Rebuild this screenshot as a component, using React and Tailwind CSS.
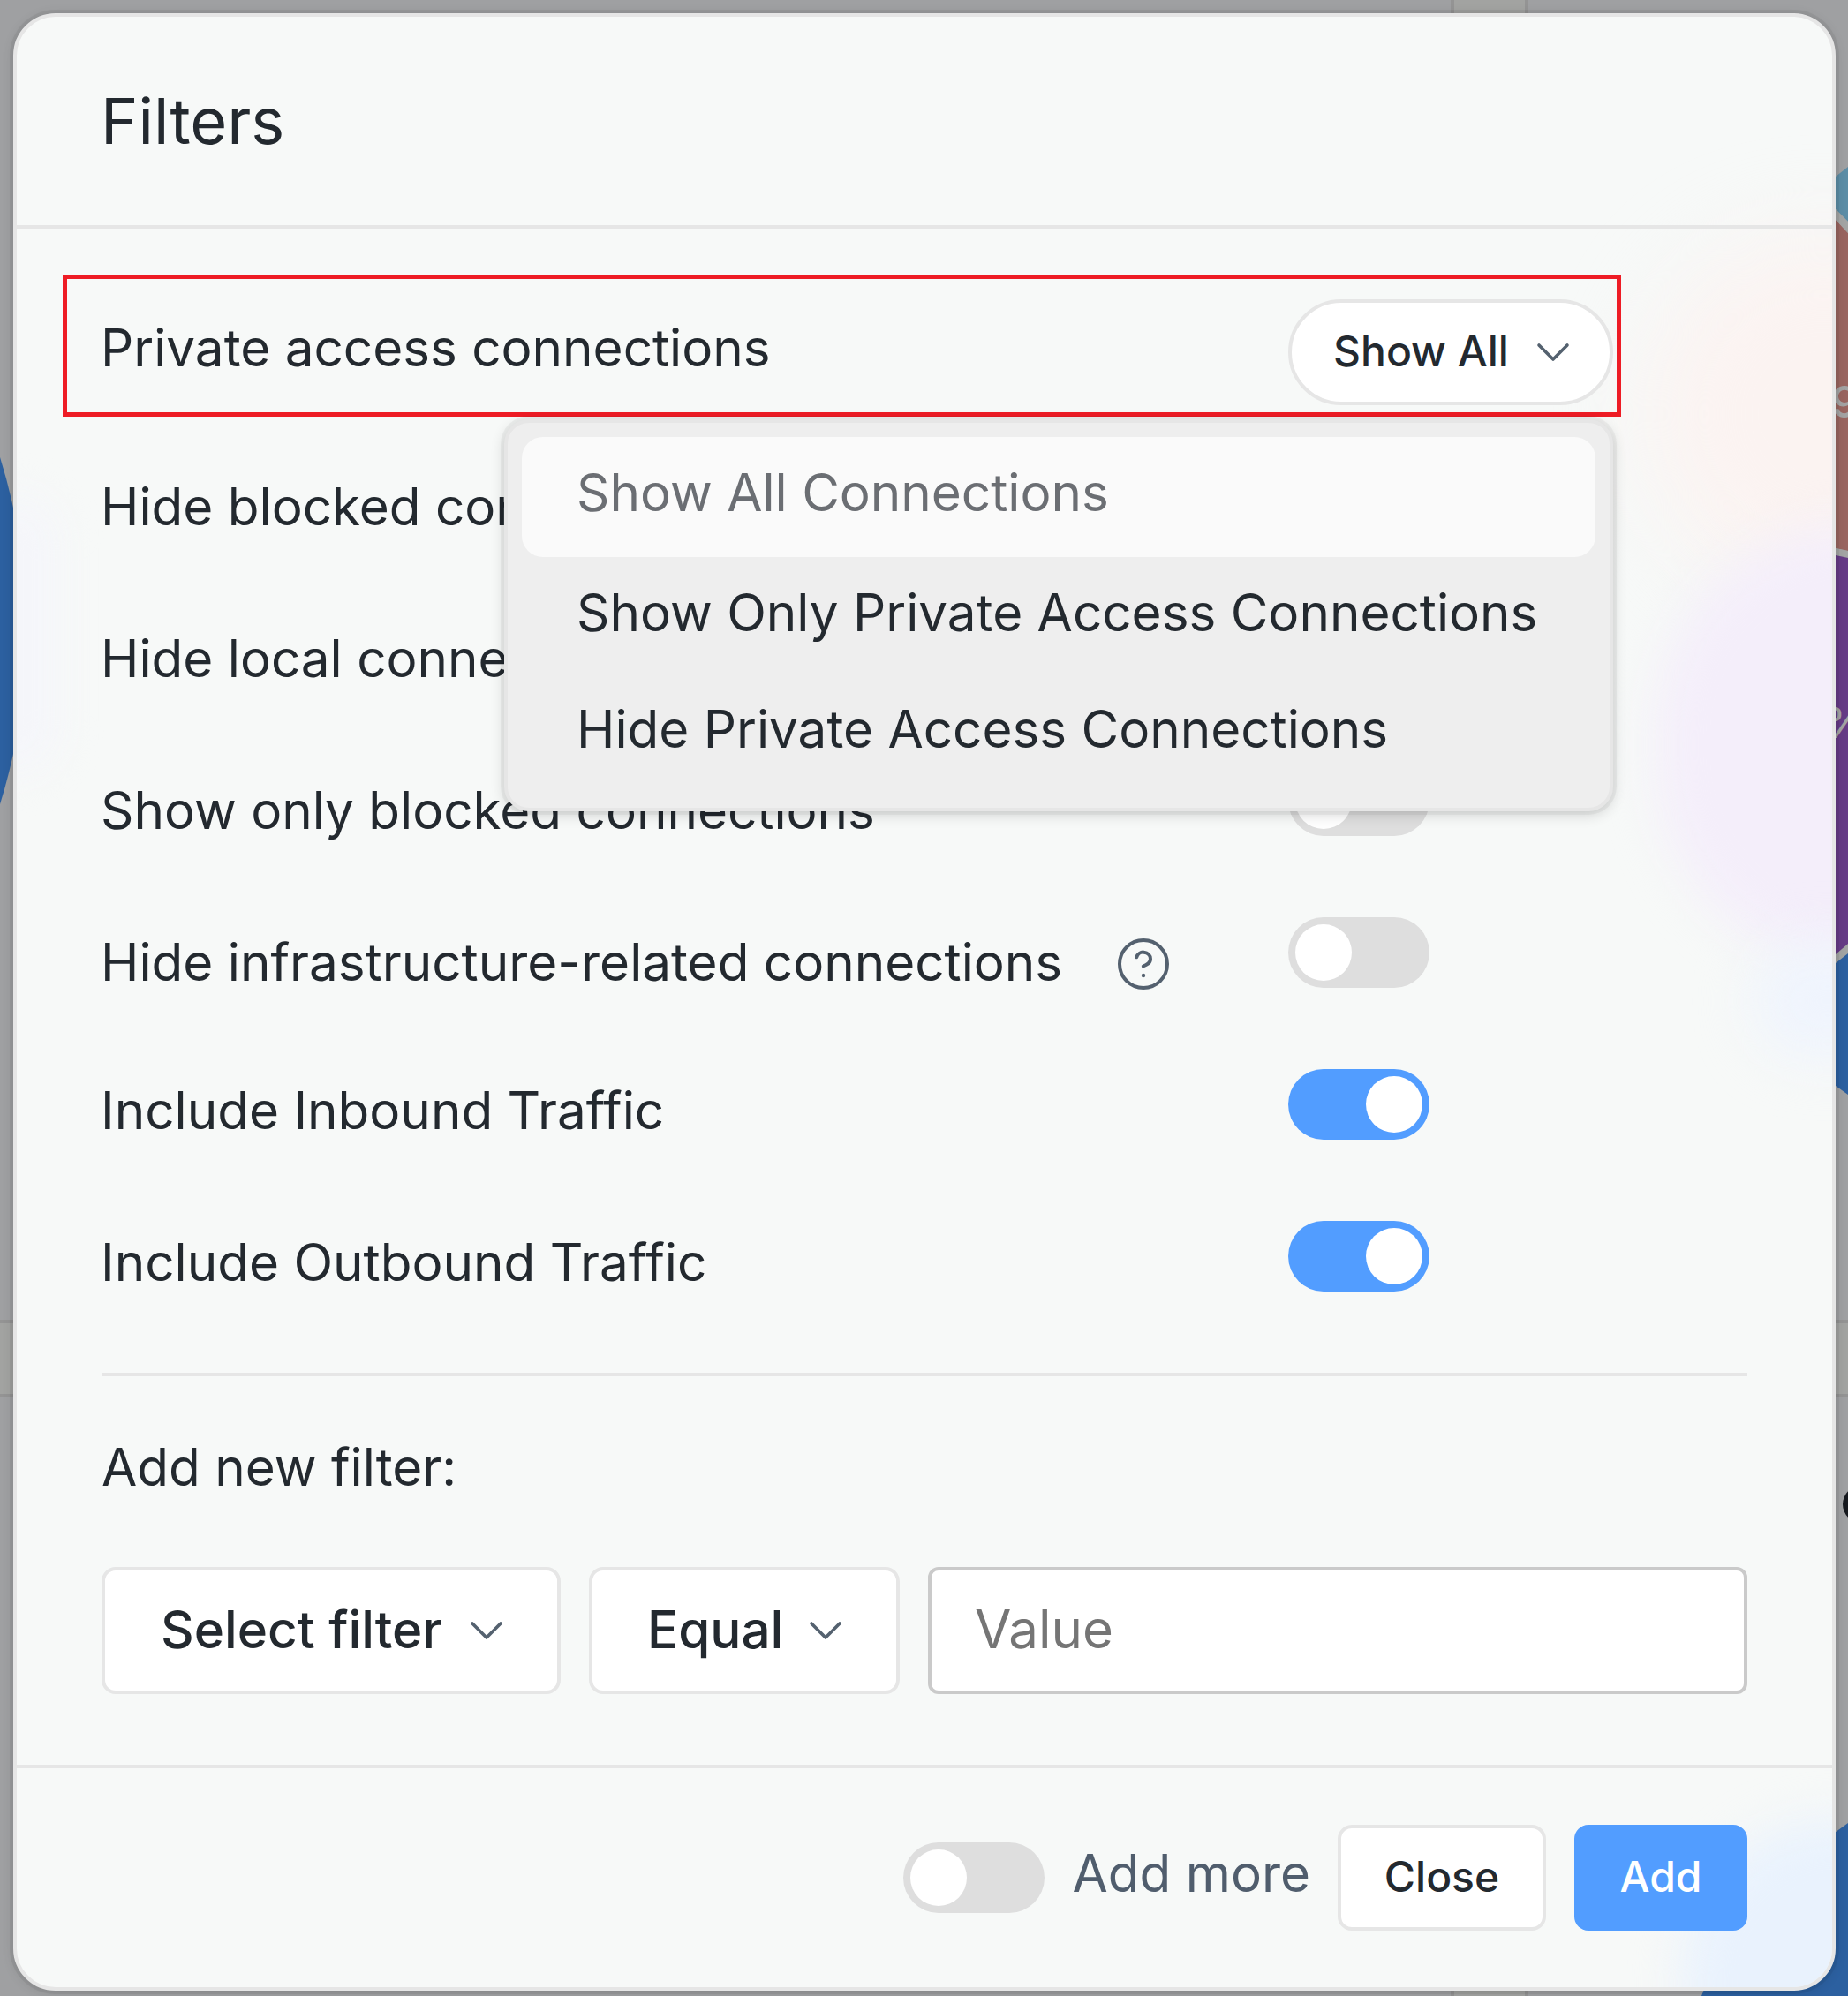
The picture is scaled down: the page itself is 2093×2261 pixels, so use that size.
const Chevron = () => (
  <svg className="mt-[4px] shrink-0" width="38" height="24" viewBox="0 0 38 24" fill="none" stroke="#54616f" strokeWidth="3.6" strokeLinecap="round" strokeLinejoin="round">
    <path d="M3 3 L19 19 L35 3" />
  </svg>
);

const Toggle = ({ on }) => (
  <div className={on ? "flex h-20 w-40 shrink-0 items-center justify-end rounded-full bg-[#529dff] px-2" : "flex h-20 w-40 shrink-0 items-center rounded-full bg-[#dedede] px-2"}>
    <div className="size-16 rounded-full bg-white" />
  </div>
);

const HelpIcon = () => (
  <svg width="64" height="64" viewBox="0 0 64 64" fill="none" stroke="#54616f" strokeWidth="4" strokeLinecap="round" strokeLinejoin="round">
    <circle cx="32" cy="32" r="27" />
    <path d="M24.2 24.3 C25.600 20.300 29 18.200 32.600 18.700 C37 19.200 40 22.500 40 26.200 C40 31 36 32.800 31.800 34.500" />
    <circle cx="32" cy="45" r="2.200" fill="#54616f" stroke="none" />
  </svg>
);

const rows = [
  { label: "Hide blocked connections", on: false },
  { label: "Hide local connections", on: false },
  { label: "Show only blocked connections", on: false },
  { label: "Hide infrastructure-related connections", on: false, help: true },
  { label: "Include Inbound Traffic", on: true, up: true },
  { label: "Include Outbound Traffic", on: true, up: true },
];

const Backdrop = () => (
  <svg className="absolute inset-0" width="2093" height="2261" viewBox="0 0 2093 2261">
    <rect width="2093" height="2261" fill="#9fa0a2" />
    <rect x="1645" y="0" width="84" height="2261" fill="#a2a3a1" />
    <path d="M1645 0V2261M1729 0V2261" stroke="#949494" strokeWidth="4" />
    <rect x="0" y="1497" width="2093" height="84" fill="#a2a3a1" />
    <path d="M0 1497H2093M0 1581H2093" stroke="#949494" strokeWidth="4" />
    <path d="M0 518 A661 661 0 0 1 0 911Z" fill="#2c60a0" />
    <path d="M2079 200 L2093 189 V251 L2079 237Z" fill="#5c8da6" />
    <path d="M2079 249 L2093 264 V624 L2079 621Z" fill="#996560" />
    <path d="M2079 237 L2093 251 V264 L2079 249Z" fill="#a3a5a4" />
    <path d="M2079 621 L2093 624 V632 L2079 629Z" fill="#a3a5a4" />
    <path d="M2079 1081 L2093 1069 V1080 L2079 1091Z" fill="#a3a5a4" />
    <path d="M2079 629 L2093 632 V1069 L2079 1081Z" fill="#663b86" />
    <path d="M2079 1091 L2093 1080 V1240 L2079 1230Z" fill="#2c60a0" />
    <path d="M1927 2261 Q1965 2155 2093 2065 V2261Z" fill="#2c60a0" />
    <text x="2074" y="473" fontSize="49" fontFamily="Inter" fontWeight="500" fill="#a3a3a3">9</text>
    <text x="2066" y="836" fontSize="48" fontFamily="Inter" fontWeight="500" fill="#a3a3a3">%</text>
    <circle cx="2108" cy="1704" r="21" fill="#16191e" />
  </svg>
);

export default function App() {
  return (
    <div className="relative flex h-[2261px] w-[2093px] overflow-hidden p-[15px] pr-[14px] pb-[6px] font-['Inter',sans-serif] text-[#23292f]">
      <Backdrop />
      <div className="relative flex w-full flex-col rounded-[48px] border-4 border-[#e6e6e6] bg-[#f7f9f8] shadow-[0_0_0_4px_rgba(0,0,0,0.05),0_2px_14px_rgba(0,0,0,0.12)]">
        <div className="pointer-events-none absolute inset-0 overflow-hidden rounded-[44px]">
          <div className="absolute top-[250px] -right-[190px] h-[400px] w-[400px] rounded-full bg-[#fbf3f1] blur-[50px]" />
          <div className="absolute top-[575px] -right-[260px] h-[500px] w-[460px] rounded-full bg-[#f4eefa] blur-[26px]" />
          <div className="absolute top-[1050px] -right-[80px] h-[130px] w-[170px] rounded-full bg-[#eff4fd] blur-[30px]" />
          <div className="absolute -right-[180px] -bottom-[180px] h-[370px] w-[350px] rounded-full bg-[#e9f2fd] blur-[26px]" />
          <div className="absolute top-[540px] -left-[60px] h-[320px] w-[110px] rounded-full bg-[#f5f6fa] blur-[20px]" />
        </div>

        <header className="relative flex h-60 shrink-0 items-center border-b-4 border-[#e6e6e6] px-24">
          <h1 className="-ml-px text-[72px] leading-[88px]">Filters</h1>
        </header>

        <main className="relative h-[1740px] shrink-0 px-24 text-[58.4px] leading-[72px]">
          <div className="relative mt-[52px] -ml-11 flex h-[161px] w-[1765px] items-center justify-between border-5 border-[#ee1c25] pr-1 pl-[38px]">
            <span className="pt-[5px]">Private access connections</span>
            <button className="mt-[15px] flex h-[120px] w-[368px] items-center justify-between rounded-full border-4 border-[#e6e6e6] bg-white pr-[45px] pb-[3px] pl-[47px] text-[48px] font-medium">
              Show All
              <Chevron />
            </button>
            <div className="absolute top-[159px] left-[495px] z-10 w-[1256px] rounded-[28px] border-4 border-[#e6e6e6] bg-[#eeeeee] px-4 pt-4 pb-5 whitespace-nowrap shadow-[0_0_0_4px_rgba(0,0,0,0.04),0_4px_16px_rgba(0,0,0,0.16)]">
              <div className="flex h-[136px] items-center rounded-3xl bg-[#fafafa] px-[62px] pb-[11px] text-[#6b6e73]">Show All Connections</div>
              <div className="flex h-[132px] items-center px-[62px] pb-[6px]">Show Only Private Access Connections</div>
              <div className="flex h-[132px] items-center px-[62px] pb-[6px]">Hide Private Access Connections</div>
            </div>
          </div>

          <div className="mt-[5px] flex flex-col">
            {rows.map((r) => (
              <div key={r.label} className="flex h-[172px] items-center">
                <div className={r.up ? "flex w-[1344px] items-center pt-[13px]" : "flex w-[1344px] items-center pt-[22px]"}>
                  <span className="-ml-px whitespace-nowrap">{r.label}</span>
                  {r.help && <span className="mt-[2px] -mb-[1px] ml-[60px]"><HelpIcon /></span>}
                </div>
                <Toggle on={r.on} />
              </div>
            ))}
          </div>

          <div className="mt-[46px] h-1 bg-[#e6e6e6]" />
          <div className="mt-[67px]">Add new filter:</div>
          <div className="mt-[77px] flex h-36 gap-8 font-medium">
            <button className="flex w-[520px] items-center justify-between rounded-2xl border-4 border-[#e6e6e6] bg-white pr-[61px] pb-[3px] pl-[63px]">Select filter<Chevron /></button>
            <button className="flex w-[352px] items-center justify-between rounded-2xl border-4 border-[#e6e6e6] bg-white pr-[61px] pb-[3px] pl-[62px]">Equal<Chevron /></button>
            <div className="flex flex-1 items-center rounded-xl border-4 border-[#cacaca] bg-white px-[49px] pb-[4px] text-[60px] font-normal text-[#757575]">Value</div>
          </div>
        </main>

        <footer className="relative flex flex-1 items-center justify-end border-t-4 border-[#e6e6e6] px-24">
          <Toggle />
          <span className="ml-8 pb-[10px] text-[58.4px] leading-[72px] text-[#505d6d]">Add more</span>
          <button className="ml-[31px] h-[120px] w-[236px] rounded-2xl border-4 border-[#e6e6e6] bg-white pb-[3px] text-[48px] font-medium">Close</button>
          <button className="ml-8 h-[120px] w-[196px] rounded-2xl bg-[#529dff] pb-[3px] text-[48px] font-medium text-white">Add</button>
        </footer>
      </div>
    </div>
  );
}
